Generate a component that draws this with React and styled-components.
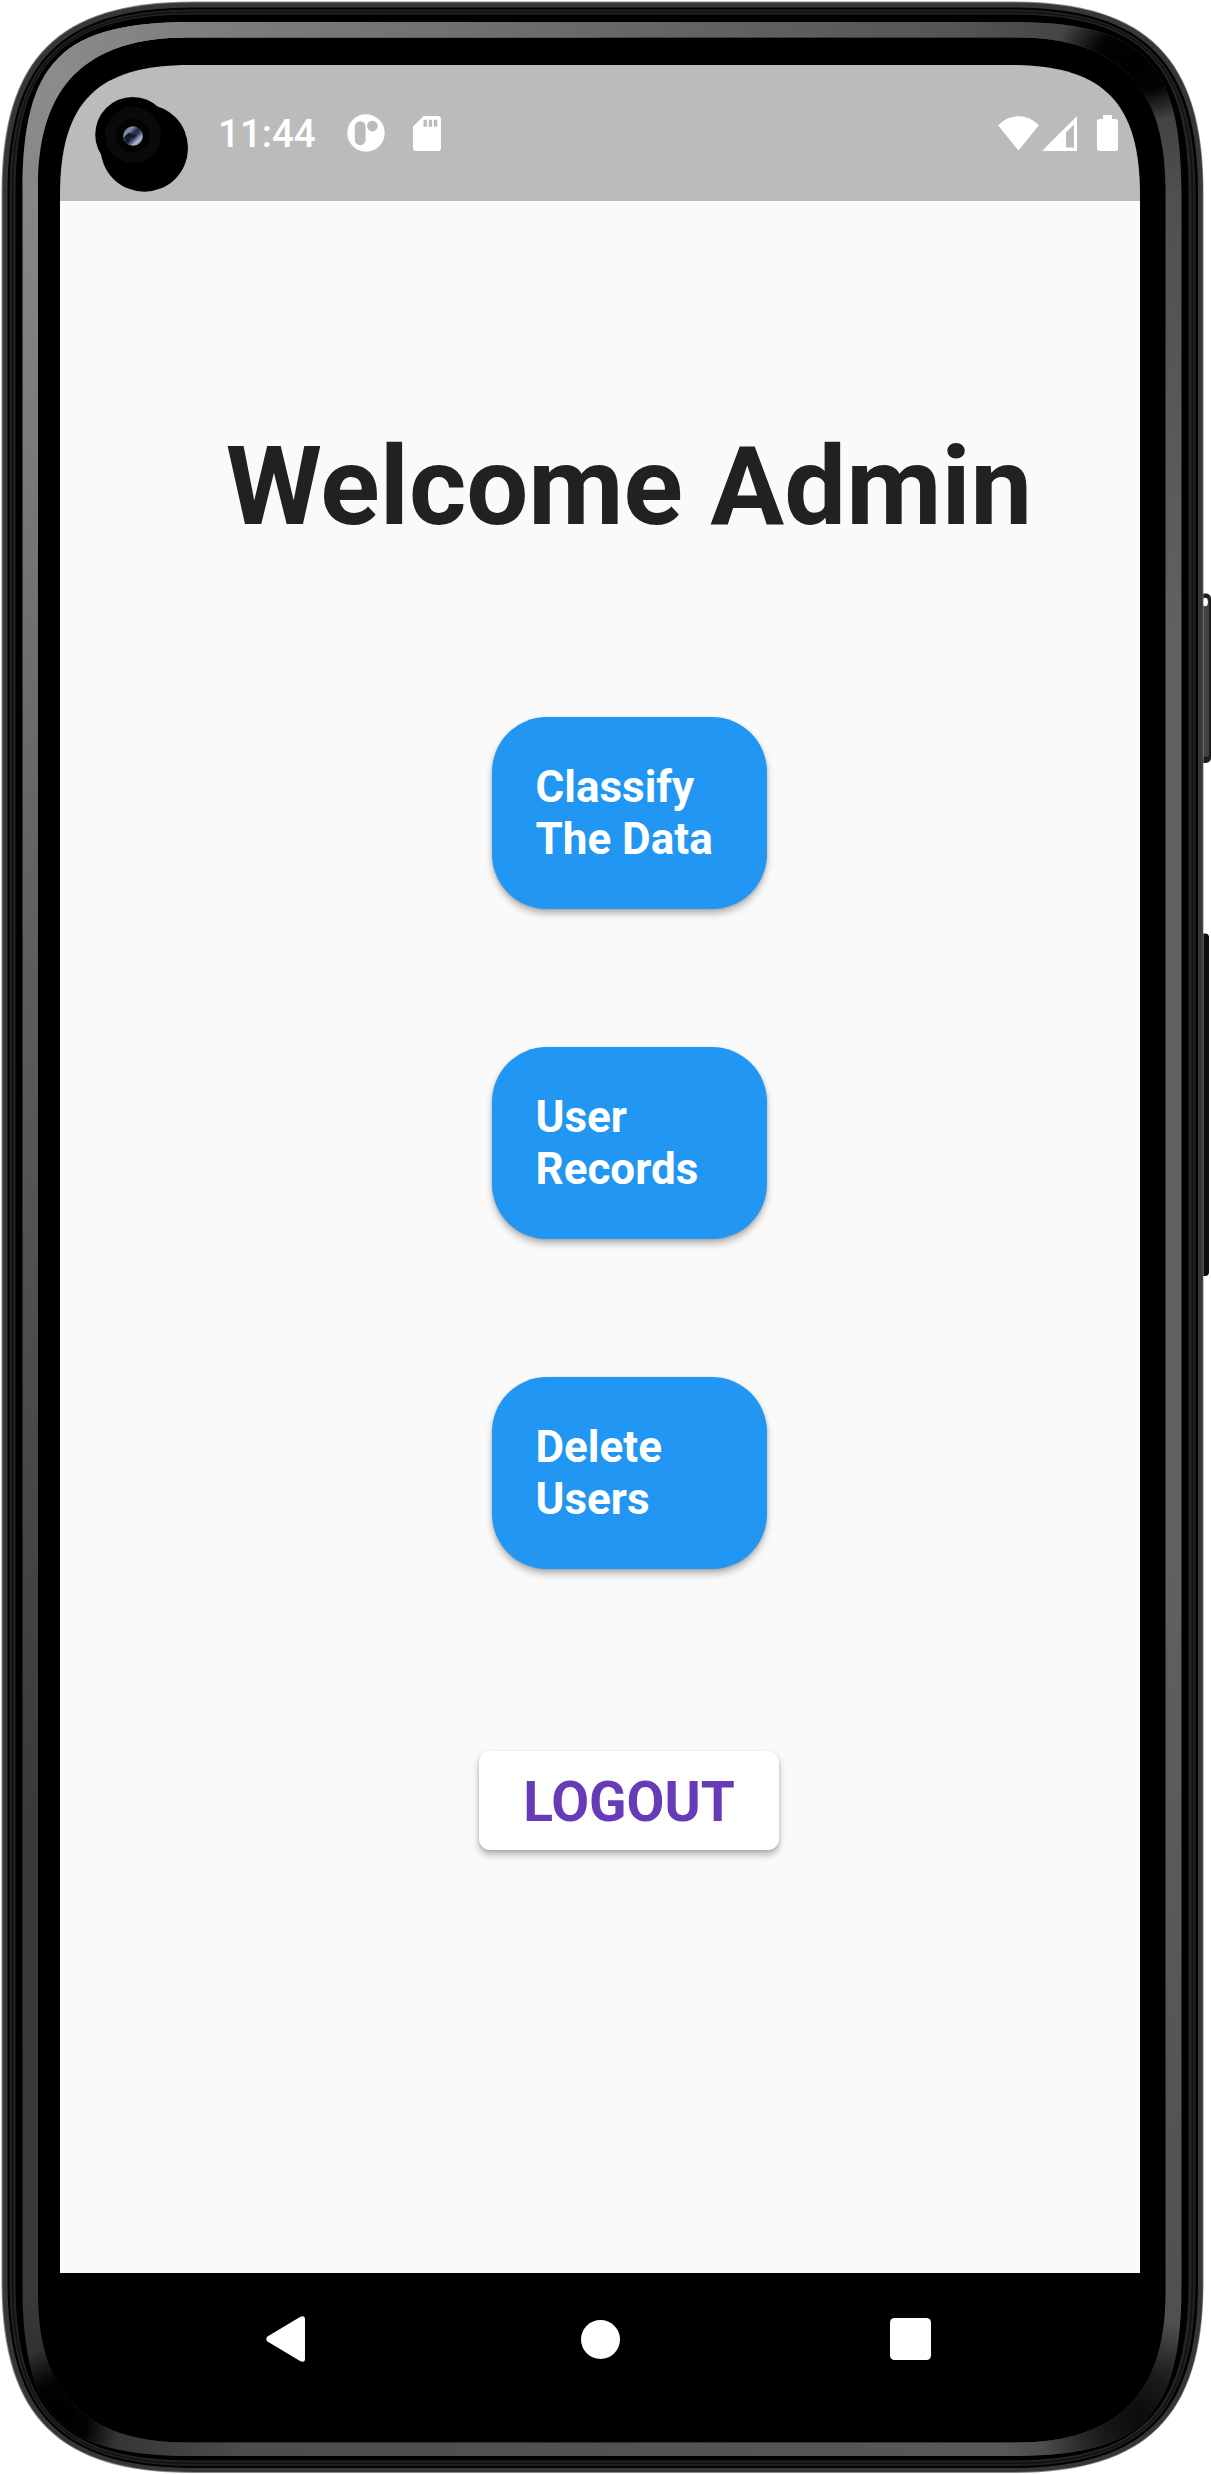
import React from "react";
import styled, { createGlobalStyle } from "styled-components";

const Global = createGlobalStyle`
  *, *::before, *::after { box-sizing: border-box; }
  body { margin: 0; background: #fff; font-family: Roboto, "Liberation Sans", sans-serif; }
`;

const Device = styled.main`
  position: relative;
  width: 1211px;
  height: 2474px;
  padding: 65px 71px 69px 60px;
  overflow: hidden;
`;

const Overlay = styled.svg`
  position: absolute;
  top: 0;
  left: 0;
  display: block;
  pointer-events: none;
`;

const Screen = styled.div`
  position: relative;
  display: flex;
  flex-direction: column;
  width: 1080px;
  height: 2340px;
  clip-path: path("M0 130 C0 37 37 0 130 0 H950 C1043 0 1080 37 1080 130 V2240 L980 2340 H100 L0 2240 Z");
`;

const StatusBar = styled.header`
  display: flex;
  justify-content: space-between;
  height: 136px;
  padding: 0 22px 0 158px;
  background: #bbb;
  color: #fff;
`;

const StatusGroup = styled.div`
  display: flex;
  align-items: center;
  height: 100%;
`;

const Clock = styled.span`
  width: 128.5px;
  font-size: 38.5px;
  font-weight: 500;
  line-height: 45px;
  white-space: nowrap;
`;

const Glyph = styled.svg`
  display: block;
  flex: none;
  fill: #fff;
  margin-left: ${(p) => p.$gap || 0}px;
`;

const Content = styled.section`
  flex: 1;
  display: flex;
  flex-direction: column;
  align-items: center;
  padding: 221px 0 0 58px;
  background: #fafafa;
`;

const Title = styled.h1`
  margin: 0 0 165.5px;
  font-size: 110px;
  font-weight: 700;
  line-height: 129px;
  color: #212121;
  white-space: nowrap;
`;

const Actions = styled.div`
  display: flex;
  flex-direction: column;
  gap: 137.5px;
  margin-bottom: 181.5px;
`;

const ActionButton = styled.button`
  display: flex;
  align-items: center;
  width: 275px;
  height: 192.5px;
  padding: 0 44px;
  border: 0;
  border-radius: 55px;
  background: #2196f3;
  color: #fff;
  font: 700 44px/52px Roboto, "Liberation Sans", sans-serif;
  text-align: left;
  white-space: pre-line;
  box-shadow: 0 5px 7px rgba(0, 0, 0, 0.26), 0 1px 3px rgba(0, 0, 0, 0.14);
`;

const LogoutButton = styled.button`
  display: flex;
  align-items: center;
  justify-content: center;
  width: 300px;
  height: 99px;
  padding: 3px 0 0;
  border: 0;
  border-radius: 11px;
  background: #fff;
  color: #673ab7;
  font: 700 55px/64px Roboto, "Liberation Sans", sans-serif;
  box-shadow: 0 5px 7px rgba(0, 0, 0, 0.26), 0 1px 3px rgba(0, 0, 0, 0.14);
`;

const NavBar = styled.nav`
  display: flex;
  align-items: center;
  height: 132px;
  padding-left: 206px;
  background: #000;
`;

/* Rounded-rectangle outline whose corners ease in longer than a circular arc. */
const squircle = (x0, y0, x1, y1, l, c) =>
  `M${x0} ${y0 + l}C${x0} ${y0 + c} ${x0 + c} ${y0} ${x0 + l} ${y0}` +
  `H${x1 - l}C${x1 - c} ${y0} ${x1} ${y0 + c} ${x1} ${y0 + l}` +
  `V${y1 - l}C${x1} ${y1 - c} ${x1 - c} ${y1} ${x1 - l} ${y1}` +
  `H${x0 + l}C${x0 + c} ${y1} ${x0} ${y1 - c} ${x0} ${y1 - l}Z`;

function Stops({ list }) {
  return list.map(([o, c, a = 1]) => <stop key={o} offset={o} stopColor={c} stopOpacity={a} />);
}

function Frame() {
  return (
    <Overlay width="1211" height="2474" viewBox="0 0 1211 2474" aria-hidden="true">
      <defs>
        <linearGradient id="left" x1="0" y1="0" x2="0" y2="1">
          <Stops list={[[0, "#8e8e8e"], [0.1, "#858585"], [0.4, "#5c5c5c"], [0.73, "#3a3a3a"], [0.93, "#383838"], [1, "#202020"]]} />
        </linearGradient>
        <linearGradient id="right" x1="0" y1="0" x2="0" y2="1">
          <Stops list={[[0, "#303030"], [0.08, "#505050"], [0.25, "#606060"], [0.6, "#626262"], [0.94, "#505050"], [1, "#262626"]]} />
        </linearGradient>
        <linearGradient id="top" x1="0" y1="0" x2="1" y2="0">
          <Stops list={[[0, "#8e8e8e"], [0.2, "#7c7c7c"], [0.8, "#545454"], [1, "#303030"]]} />
        </linearGradient>
        <linearGradient id="bottom" x1="0" y1="0" x2="1" y2="0">
          <Stops list={[[0, "#202020"], [0.2, "#4c4c4c"], [0.83, "#585858"], [1, "#262626"]]} />
        </linearGradient>
        <radialGradient id="shade">
          <Stops list={[[0, "#000"], [0.5, "#000", 0.95], [1, "#000", 0]]} />
        </radialGradient>
        <radialGradient id="soft">
          <Stops list={[[0, "#000", 0.8], [0.4, "#000", 0.6], [1, "#000", 0]]} />
        </radialGradient>
        <clipPath id="band">
          <path clipRule="evenodd" d={squircle(22.5, 22, 1181.5, 2456, 170, 39) + squircle(38, 37.5, 1165.5, 2442.5, 150, 48)} />
        </clipPath>
      </defs>
      <rect x="1196" y="593.5" width="15" height="169.5" rx="5" fill="#1c1d1c" />
      <rect x="1203" y="598" width="6" height="159" rx="3" fill="#414342" />
      <ellipse cx="1205.3" cy="602" rx="2.6" ry="4.3" fill="#fff" />
      <rect x="1196" y="933.5" width="13" height="342.5" rx="4" fill="#0c0c0c" />
      <path d={squircle(1.5, 1.5, 1203.5, 2473, 190, 57)} fill="#8b8c8a" />
      <path d={squircle(2.5, 2.5, 1202.8, 2472, 190, 56)} fill="#353736" />
      <path d={squircle(7.5, 7.5, 1198, 2468, 186, 54)} fill="#020202" />
      <path d={squircle(9.5, 9.5, 1195.5, 2466, 184, 53)} fill="#202020" />
      <path d={squircle(12, 11.5, 1193, 2464, 182, 51)} fill="#101010" />
      <path d={squircle(13.5, 13, 1191.5, 2462.5, 180, 50)} fill="#242424" />
      <path d={squircle(15.5, 14.5, 1188.5, 2460.5, 178, 48)} fill="#000" />
      <g clipPath="url(#band)">
        <rect width="600" height="2474" fill="url(#left)" />
        <rect x="600" width="611" height="2474" fill="url(#right)" />
        <path d="M0 0H1204L1004 200H200Z" fill="url(#top)" />
        <path d="M0 2478H1204L1004 2278H200Z" fill="url(#bottom)" />
        <ellipse cx="1138" cy="60" rx="84" ry="62" fill="url(#shade)" />
        <ellipse cx="56" cy="2420" rx="62" ry="72" fill="url(#shade)" />
        <ellipse cx="1138" cy="2416" rx="100" ry="100" fill="url(#soft)" />
      </g>
    </Overlay>
  );
}

function Camera() {
  return (
    <Overlay width="240" height="240" viewBox="0 0 240 240" aria-hidden="true">
      <defs>
        <linearGradient id="lens" x1="0" y1="0" x2="1" y2="1">
          <Stops list={[[0, "#30374d"], [0.25, "#8794b8"], [0.45, "#252a3c"], [0.58, "#39425c"], [0.75, "#a9bbd8"], [1, "#4a5570"]]} />
        </linearGradient>
      </defs>
      <circle cx="144.3" cy="148" r="43.7" />
      <circle cx="132.7" cy="134.5" r="37.5" />
      <circle cx="133" cy="135" r="28" fill="#0a0a0a" />
      <circle cx="132.7" cy="135.5" r="17" fill="#030303" />
      <circle cx="133" cy="136" r="9.8" fill="url(#lens)" />
      <path d="M124 138q4-7 8-4t8-4l-6 8q-4-2-6 6z" fill="#151827" />
    </Overlay>
  );
}

const ACTIONS = ["Classify\nThe Data", "User\nRecords", "Delete\nUsers"];

export default function App() {
  return (
    <>
      <Global />
      <Device>
        <Frame />
        <Screen>
          <StatusBar>
            <StatusGroup>
              <Clock>11:44</Clock>
              <Glyph width="38" height="38" viewBox="0 0 38 38">
                <path fillRule="evenodd" d="M19 .3a18.7 18.7 0 1 1 0 37.4A18.7 18.7 0 0 1 19 .3ZM13.2 7.2a5.4 5.4 0 0 0-5.4 5.4v13.2a5.4 5.4 0 0 0 10.8 0V12.6a5.4 5.4 0 0 0-5.4-5.4ZM25.4 6.8a5.3 5.3 0 1 0 0 10.6a5.3 5.3 0 0 0 0-10.6Z" />
              </Glyph>
              <Glyph $gap={28} width="28" height="35" viewBox="0 0 28 35">
                <path fillRule="evenodd" d="M10.7 0H25a3 3 0 0 1 3 3v29a3 3 0 0 1-3 3H3a3 3 0 0 1-3-3V10.5ZM10.5 3.7v7h3.4v-7ZM15.7 3.7v7h3.4v-7ZM20.9 3.7v7h3.4v-7Z" />
              </Glyph>
            </StatusGroup>
            <StatusGroup>
              <Glyph width="41" height="35" viewBox="0 0 41 35">
                <path d="M0 9.3Q9 .2 20.500 .2T41 9.300L20.500 34.600Z" />
              </Glyph>
              <Glyph $gap={3} width="35" height="35" viewBox="0 0 35 35">
                <path fillRule="evenodd" d="M35 0v35H0ZM32 8.500 24 16.500V31.500h8Z" />
              </Glyph>
              <Glyph $gap={20} width="21" height="36" viewBox="0 0 21 36">
                <path d="M6 0h9v4h3.500a2.500 2.500 0 0 1 2.500 2.500V33.500a2.500 2.500 0 0 1-2.500 2.500h-16A2.500 2.500 0 0 1 0 33.500V6.500A2.500 2.500 0 0 1 2.500 4H6Z" />
              </Glyph>
            </StatusGroup>
          </StatusBar>
          <Content>
            <Title>Welcome Admin</Title>
            <Actions>
              {ACTIONS.map((label) => (
                <ActionButton key={label}>{label}</ActionButton>
              ))}
            </Actions>
            <LogoutButton>LOGOUT</LogoutButton>
          </Content>
          <NavBar>
            <Glyph width="39" height="46" viewBox="0 0 39 46">
              <path d="M1.500 20.500 34 1Q39-1.500 39 3.500V42.500Q39 47.500 34 45L1.500 25.500Q-.8 23 1.500 20.500Z" />
            </Glyph>
            <Glyph $gap={276} width="39" height="39" viewBox="0 0 39 39">
              <circle cx="19.500" cy="19.500" r="19.500" />
            </Glyph>
            <Glyph $gap={270} width="41" height="42" viewBox="0 0 41 42">
              <rect width="41" height="42" rx="4.500" />
            </Glyph>
          </NavBar>
        </Screen>
        <Camera />
      </Device>
    </>
  );
}
